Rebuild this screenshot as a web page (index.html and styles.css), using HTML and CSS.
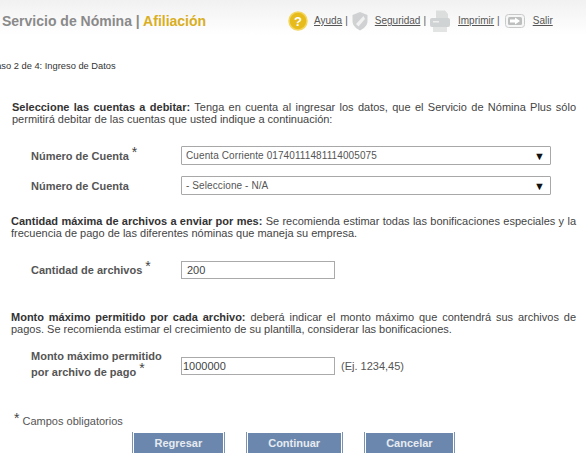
FILE: index.html
```html
<!DOCTYPE html>
<html lang="es">
<head>
<meta charset="utf-8">
<title>Servicio de Nómina</title>
<link rel="stylesheet" href="styles.css">
</head>
<body>
<header class="top">
  <h1 class="title">Servicio de Nómina | <span class="accent">Afiliación</span></h1>
  <nav class="tools">
    <svg class="ic-help" viewBox="0 0 20 22" width="20" height="22"><circle cx="10" cy="11" r="9" fill="#e8bb1c" stroke="#f3d65e" stroke-width="1.5"/><text x="10" y="15.500" text-anchor="middle" class="q">?</text></svg>
    <a class="link l-ayuda" href="#">Ayuda</a><span class="sep">|</span>
    <svg class="ic-shield" viewBox="0 0 16 20" width="16" height="20"><path d="M8 1 L15.500 4 V10 C15.500 15 11 18 8 19.500 C5 18 0.500 15 0.500 10 V4 Z" fill="#cfd1d2"/><path d="M4 13 L11.500 5 L13 8 L6.500 15.500 Z" fill="#f1f1f1"/></svg>
    <a class="link l-seg" href="#">Seguridad</a><span class="sep">|</span>
    <svg class="ic-print" viewBox="0 0 20 22" width="20" height="22"><path d="M6 0.500 H15 L18 4 V8 H6 Z" fill="#dcdede"/><rect x="0" y="8" width="20" height="9" rx="2" fill="#d0d3d3"/><rect x="3" y="11" width="6" height="1.500" fill="#eeeeee"/><rect x="3" y="17" width="14" height="5" fill="#e2e4e4"/></svg>
    <a class="link l-imp" href="#">Imprimir</a><span class="sep">|</span>
    <svg class="ic-exit" viewBox="0 0 20 14" width="20" height="14"><rect x="0.500" y="0.500" width="19" height="13" rx="3" fill="#f6f6f6" stroke="#c8caca"/><rect x="3" y="3" width="14" height="8" rx="1.500" fill="#bdbfbf"/><path d="M5 5.500 H10 V3.500 L15 7 L10 10.500 V8.500 H5 Z" fill="#fff"/></svg>
    <a class="link l-salir" href="#">Salir</a>
  </nav>
</header>

<main class="page">
  <p class="step">Paso 2 de 4: Ingreso de Datos</p>

  <p class="info info-1"><strong>Seleccione las cuentas a debitar:</strong> Tenga en cuenta al ingresar los datos, que el Servicio de Nómina Plus sólo permitirá debitar de las cuentas que usted indique a continuación:</p>

  <div class="row row-a">
    <span class="label">Número de Cuenta <sup class="req">*</sup></span>
    <div class="select"><span>Cuenta Corriente 01740111481114005075</span><span class="arrow">▼</span></div>
  </div>
  <div class="row row-b">
    <span class="label">Número de Cuenta</span>
    <div class="select"><span>- Seleccione - N/A</span><span class="arrow">▼</span></div>
  </div>

  <p class="info info-2"><strong>Cantidad máxima de archivos a enviar por mes:</strong> Se recomienda estimar todas las bonificaciones especiales y la frecuencia de pago de las diferentes nóminas que maneja su empresa.</p>

  <div class="row row-c">
    <span class="label">Cantidad de archivos <sup class="req">*</sup></span>
    <input class="field" type="text" value="200">
  </div>

  <p class="info info-3"><strong>Monto máximo permitido por cada archivo:</strong> deberá indicar el monto máximo que contendrá sus archivos de pagos. Se recomienda estimar el crecimiento de su plantilla, considerar las bonificaciones.</p>

  <div class="row row-d">
    <span class="label">Monto máximo permitido<br>por archivo de pago <sup class="req">*</sup></span>
    <input class="field" type="text" value="1000000">
    <span class="hint">(Ej. 1234,45)</span>
  </div>

  <p class="note"><sup class="req">*</sup> Campos obligatorios</p>

  <div class="actions">
    <button class="btn" type="button">Regresar</button>
    <button class="btn" type="button">Continuar</button>
    <button class="btn" type="button">Cancelar</button>
  </div>
</main>
</body>
</html>
```
FILE: styles.css
```css
* { box-sizing: border-box; }
html, body { margin: 0; padding: 0; background: #fff; overflow: hidden; }
body { width: 586px; height: 469px; font-family: "Liberation Sans", Arial, sans-serif; color: #4a4a4a; font-size: 11px; }

.top { height: 41px; display: flex; align-items: center; justify-content: space-between; padding: 0 0 0 2px; background: linear-gradient(#f1f1f1, #fff 85%); }
.title { margin: 0; font-size: 14px; font-weight: bold; color: #8a8a8a; line-height: 16px; }
.accent { color: #d9ae22; }

.tools { display: flex; align-items: center; width: 298px; }
.ic-help { margin-right: 6px; flex: none; }
.ic-shield { margin: 0 7px 0 4px; flex: none; }
.ic-print { margin: 0 8px 0 4px; flex: none; }
.ic-exit { margin: 0 8px 0 5px; flex: none; }
.link { color: #555; font-size: 10px; text-decoration: underline; }
.sep { color: #555; font-size: 10px; margin-left: 3px; }
.q { font: bold 13px "Liberation Sans", sans-serif; fill: #fff; }

.step { margin: 20px 0 0 -10px; font-size: 9.300px; line-height: 11px; color: #333; white-space: nowrap; }

.info { margin: 0 10px 0 11px; font-size: 11px; line-height: 12px; text-align: justify; color: #444; }
.info strong { color: #333; }
.info-1 { margin-top: 29px; margin-left: 12px; }
.info-2 { margin-top: 20px; }
.info-3 { margin-top: 32px; }

.row { display: flex; align-items: center; padding-left: 31px; }
.row-a { margin-top: 21px; }
.row-b { margin-top: 11px; }
.row-c { margin-top: 22px; }
.row-d { margin-top: 13px; }

.label { flex: none; width: 150px; font-size: 11px; font-weight: bold; color: #555; line-height: 16px; }
.row-d .label { margin-bottom: 4px; }
.req { font-size: 14px; font-weight: normal; line-height: 0; vertical-align: 3px; color: #444; }

.select { display: flex; justify-content: space-between; align-items: center; width: 370px; height: 19px; padding: 0 5px 0 4px; border: 1px solid #a8a8a8; border-radius: 1px; font-size: 10px; letter-spacing: 0.1px; color: #555; background: #fff; }
.arrow { font-size: 11px; color: #111; }

.field { width: 154px; height: 18px; padding: 0 1px; margin: 0; border: 1px solid #aaa; background: #fff; font: 11px "Liberation Sans", sans-serif; color: #444; outline: none; }
.row-c .field { padding-left: 5px; }
.hint { margin-left: 6px; font-size: 11px; color: #555; }

.note { margin: 31px 0 0 14px; font-size: 11px; line-height: 12px; color: #555; }
.note .req { vertical-align: 2px; }

.actions { display: flex; gap: 21px; margin: 5px 0 0 132px; }
.btn { height: 21px; padding: 0 21.500px; border: 0; border-left: 1px solid #7b93b3; border-right: 1px solid #7b93b3; background: #6b87ad; box-shadow: inset 1px 0 #fff, inset -1px 0 #fff, inset 0 1px #fff; font: bold 11px "Liberation Sans", sans-serif; color: #e6ebf1; }
```
